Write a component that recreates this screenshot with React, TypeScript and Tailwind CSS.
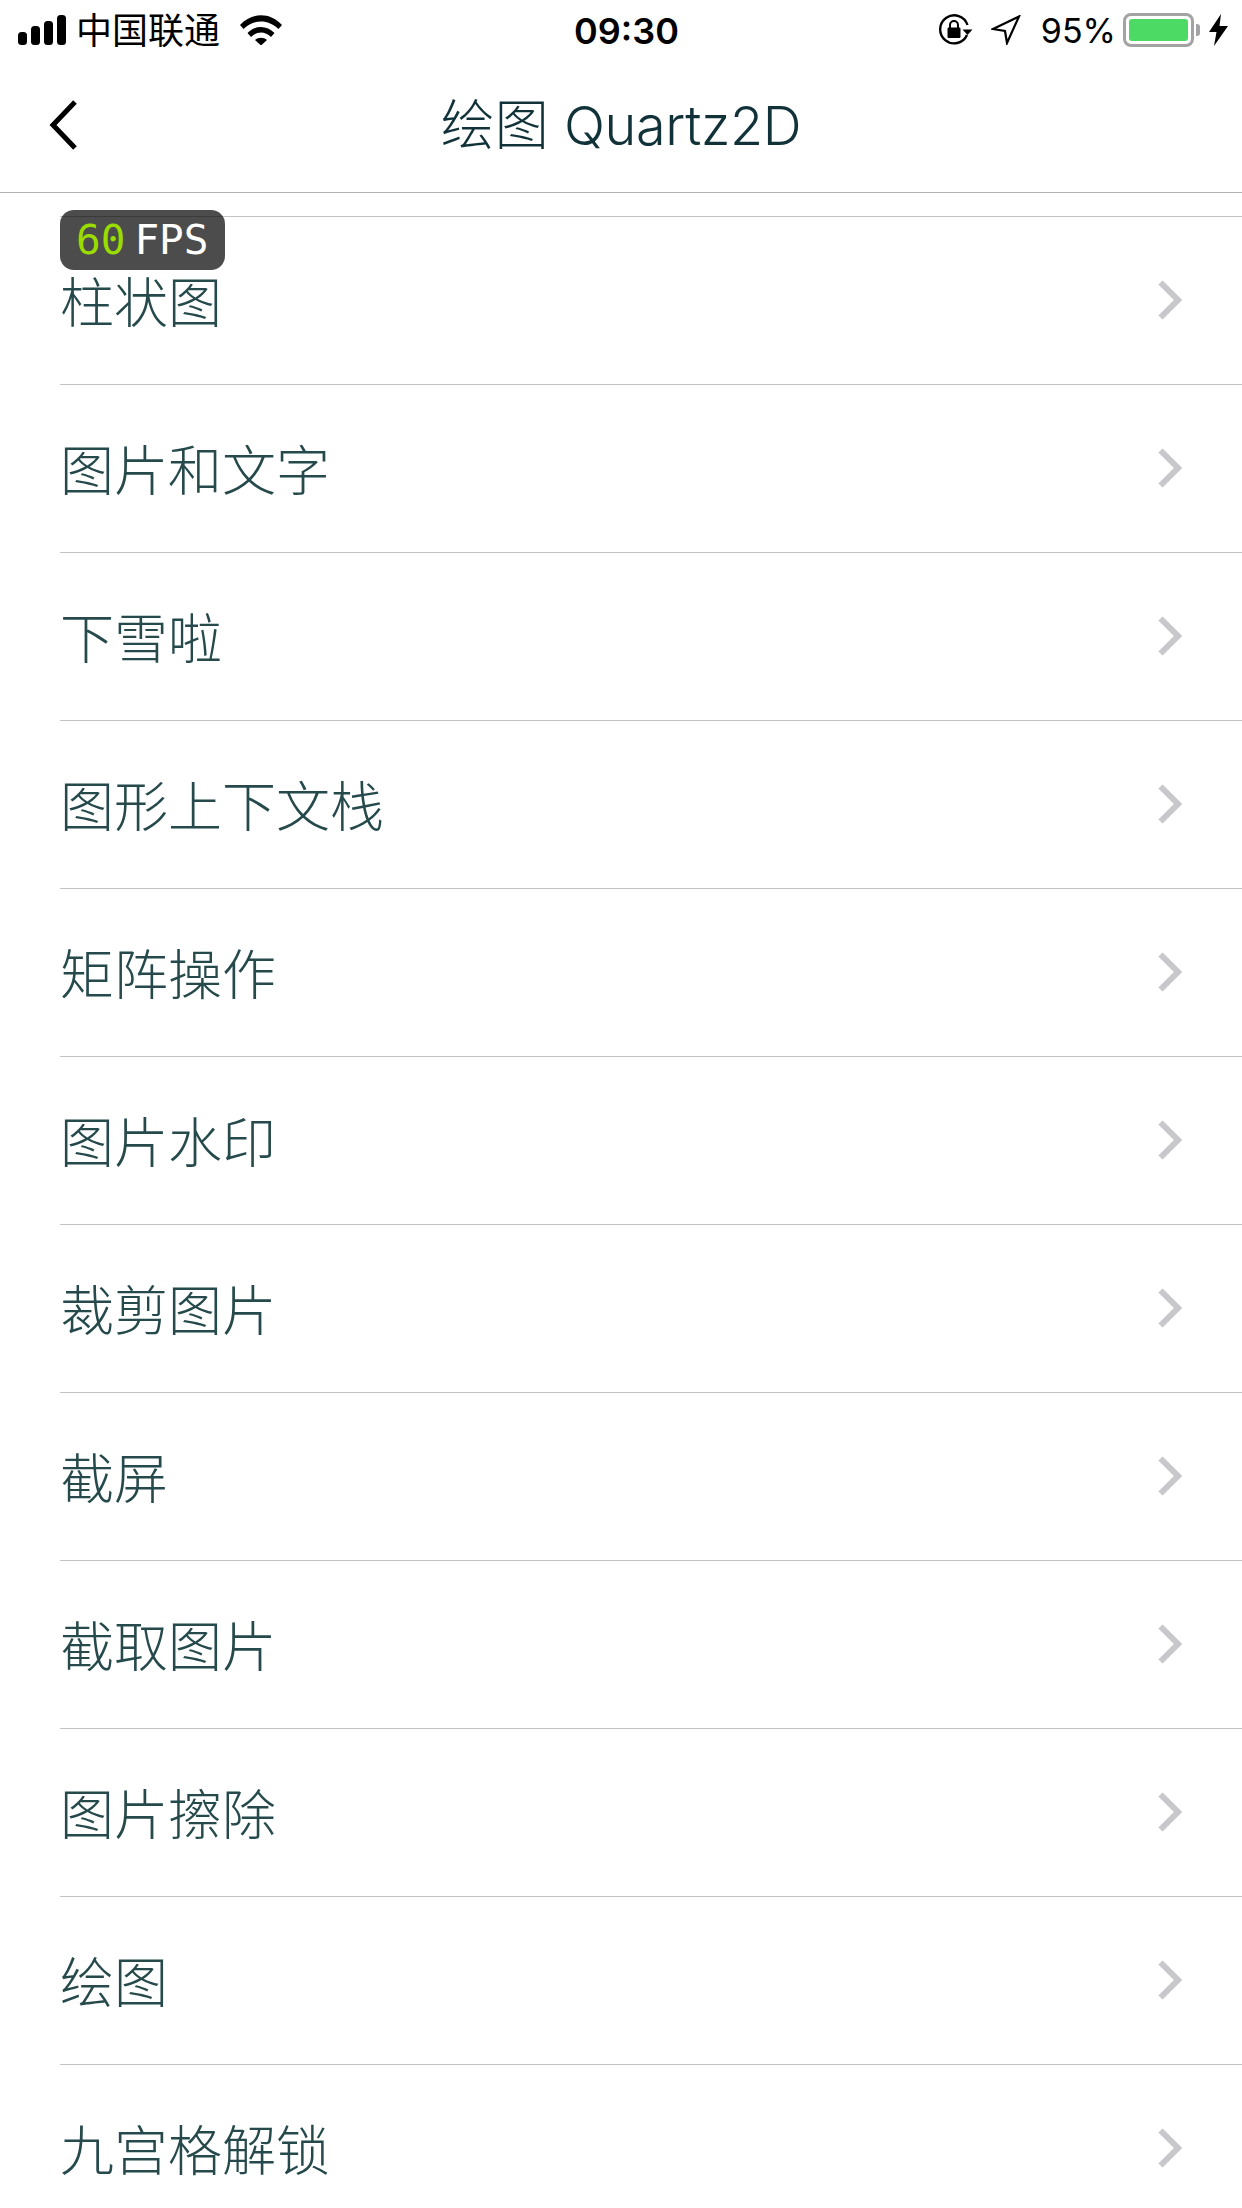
const ROWS = [
  "柱状图",
  "图片和文字",
  "下雪啦",
  "图形上下文栈",
  "矩阵操作",
  "图片水印",
  "裁剪图片",
  "截屏",
  "截取图片",
  "图片擦除",
  "绘图",
  "九宫格解锁",
];

const CJK = "font-['Inter','Noto_Sans_CJK_SC',sans-serif]";

function SignalIcon() {
  return (
    <svg width="48" height="30" viewBox="0 0 48 30" fill="#000">
      <rect x="0" y="17" width="9" height="13" rx="3.5" />
      <rect x="13" y="11" width="9" height="19" rx="3.5" />
      <rect x="26" y="6" width="9" height="24" rx="3.5" />
      <rect x="39" y="0" width="9" height="30" rx="3.5" />
    </svg>
  );
}

function WifiIcon() {
  return (
    <svg width="42" height="30" viewBox="0 0 42 30" fill="#000">
      <path d="M0 10 C12 -3 30 -3 42 10 L38.5 14 C28 4 14 4 3.5 14 Z" />
      <path d="M7.5 18 C15 10 27 10 34.5 18 L31 22 C25 16 17 16 11 22 Z" />
      <path d="M15 25 C18.5 22 23.5 22 27 25 L21 30.5 Z" />
    </svg>
  );
}

function RotationLockIcon() {
  return (
    <svg width="36" height="32" viewBox="0 0 36 32" fill="none">
      <path d="M29 21 A14 14 0 1 1 29.5 11" stroke="#000" strokeWidth="2.4" />
      <path d="M24.5 15.5 H34.5 L29.5 21 Z" fill="#000" />
      <rect x="9.5" y="13.5" width="13" height="10.5" rx="1.2" fill="#000" />
      <path d="M12 14 V11 a4 4 0 0 1 8 0 V14" stroke="#000" strokeWidth="2" />
    </svg>
  );
}

function LocationIcon() {
  return (
    <svg width="30" height="30" viewBox="0 0 30 30" fill="none">
      <path d="M28 1.5 L2 14 L14 16 L16 28 Z" stroke="#000" strokeWidth="2.2" strokeLinejoin="miter" />
    </svg>
  );
}

function Battery() {
  return (
    <div className="flex items-center">
      <div className="h-[34px] w-[71px] rounded-[8px] border-[3px] border-[#a3a3a3] p-[3px]">
        <div className="h-full w-full rounded-[3px] bg-[#4cd964]" />
      </div>
      <div className="ml-[2px] h-[12px] w-[4px] rounded-r-[3px] bg-[#a3a3a3]" />
    </div>
  );
}

function BoltIcon() {
  return (
    <svg width="19" height="32" viewBox="0 0 19 32" fill="#000">
      <path d="M12 0 L0 18 H7.5 L5 32 L19 12 H10.5 Z" />
    </svg>
  );
}

function StatusBar() {
  return (
    <div className="flex h-[60px] shrink-0 items-center">
      <div className="flex w-[574px] items-center pl-[18px]">
        <SignalIcon />
        <span className={`ml-[10px] translate-y-[1px] text-[36px] leading-[40px] text-black ${CJK}`}>中国联通</span>
        <div className="ml-[20px]">
          <WifiIcon />
        </div>
      </div>
      <div className="w-[104px] translate-y-[1px] font-['Inter',sans-serif] text-[36px] font-semibold leading-[40px] text-black">09:30</div>
      <div className="flex flex-1 items-center justify-end pr-[14px]">
        <RotationLockIcon />
        <div className="ml-[17px]">
          <LocationIcon />
        </div>
        <span className="ml-[20px] translate-y-[1px] font-['Inter',sans-serif] text-[34px] leading-[40px] text-black">95%</span>
        <div className="ml-[7px]">
          <Battery />
        </div>
        <div className="ml-[9px]">
          <BoltIcon />
        </div>
      </div>
    </div>
  );
}

function NavBar() {
  return (
    <div className="grid h-[133px] shrink-0 grid-cols-[1fr_auto_1fr] items-center border-b border-[#b2b2b2]">
      <div className="pl-[47px]">
        <svg width="32" height="52" viewBox="0 0 32 52" fill="none" className="block -translate-y-[1px]">
          <path d="M28 3 L6 26 L28 49" stroke="#000" strokeWidth="5" />
        </svg>
      </div>
      <div className={`text-[54px] font-light leading-[64px] text-[#12323a] ${CJK}`}>
        绘图 <span className="tracking-[-0.35px]">Quartz2D</span>
      </div>
      <div />
    </div>
  );
}

function Row({ title }: { title: string }) {
  return (
    <div className="ml-[60px] flex h-[168px] shrink-0 items-center justify-between border-t border-[#c4c4c4] pr-[60px]">
      <span className={`translate-y-[3px] text-[54px] font-light leading-[64px] text-[#264a4c] ${CJK}`}>{title}</span>
      <svg width="24" height="40" viewBox="0 0 24 40" fill="none" className="-translate-y-[1px]">
        <path d="M2.5 2.5 L20 20 L2.5 37.5" stroke="#c7c7cc" strokeWidth="6" />
      </svg>
    </div>
  );
}

function FpsBadge() {
  return (
    <div className="absolute left-[60px] top-[210px] flex h-[60px] w-[165px] items-center rounded-[14px] bg-[#000000b3] pl-[16px] font-['DejaVu_Sans_Mono',monospace] text-[41px] leading-none">
      <span className="text-[#9bdc00]">60</span>
      <span className="ml-[9px] text-white">FPS</span>
    </div>
  );
}

export default function App() {
  return (
    <div className="relative flex h-[2208px] w-[1242px] flex-col overflow-hidden bg-white">
      <StatusBar />
      <NavBar />
      <div className="flex shrink-0 flex-col pt-[23px]">
        {ROWS.map((title) => (
          <Row key={title} title={title} />
        ))}
      </div>
      <FpsBadge />
    </div>
  );
}
